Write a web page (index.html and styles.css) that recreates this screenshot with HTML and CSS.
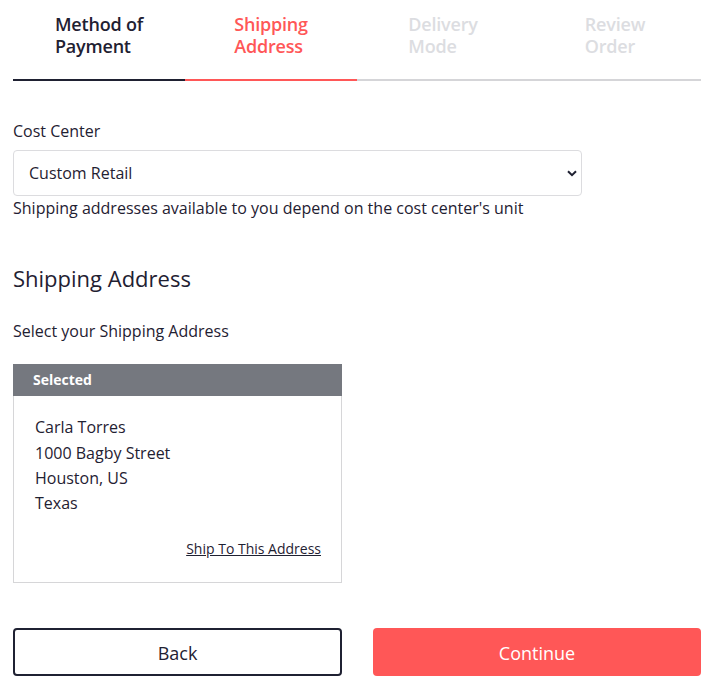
FILE: index.html
```html
<!DOCTYPE html>
<html lang="en">
<head>
<meta charset="utf-8">
<title>Checkout - Shipping Address</title>
<link rel="stylesheet" href="styles.css">
</head>
<body>
<div class="page">
  <nav class="steps">
    <div class="step step-done"><span class="step-label">Method of<br>Payment</span></div>
    <div class="step step-active"><span class="step-label">Shipping<br>Address</span></div>
    <div class="step step-todo"><span class="step-label">Delivery<br>Mode</span></div>
    <div class="step step-todo"><span class="step-label">Review<br>Order</span></div>
  </nav>

  <section class="cost-center">
    <label class="field-label" for="cc">Cost Center</label>
    <div class="select-wrap">
      <select id="cc" class="select">
        <option>Custom Retail</option>
      </select>
      <svg class="chev" width="10" height="7" viewBox="0 0 10 7"><path d="M1 1.2 L5 5.2 L9 1.2" fill="none" stroke="#1f2132" stroke-width="2"/></svg>
    </div>
    <p class="help">Shipping addresses available to you depend on the cost center's unit</p>
  </section>

  <h2 class="heading">Shipping Address</h2>
  <p class="sub">Select your Shipping Address</p>

  <div class="card">
    <div class="card-head">Selected</div>
    <div class="card-body">
      <div class="addr">
        <div>Carla Torres</div>
        <div>1000 Bagby Street</div>
        <div>Houston, US</div>
        <div>Texas</div>
      </div>
      <div class="card-action"><a href="#" class="ship-link">Ship To This Address</a></div>
    </div>
  </div>

  <div class="actions">
    <button class="btn btn-back">Back</button>
    <button class="btn btn-continue">Continue</button>
  </div>
</div>
</body>
</html>
```

FILE: styles.css
```css
* { box-sizing: border-box; }
html, body { margin: 0; padding: 0; background: #fff; }
body {
  font-family: "Open Sans", "Noto Sans", sans-serif;
  color: #1f2132;
  font-size: 16px;
}
.page {
  width: 710px;
  padding: 0 9px 0 13px;
}
.steps {
  display: flex;
  width: 688px;
}
.step {
  flex: 1 1 0;
  display: flex;
  justify-content: center;
  padding: 13px 0 22px;
  border-bottom: 2px solid #d5d5d8;
}
.step-label {
  display: inline-block;
  text-align: left;
  font-size: 18px;
  font-weight: 600;
  line-height: 22px;
  letter-spacing: -0.2px;
}
.step-done { border-bottom-color: #1f2132; color: #1f2132; }
.step-active { border-bottom-color: #ff5757; color: #ff5757; }
.step-todo { color: #dcdde1; }

.cost-center { margin-top: 38px; width: 569px; }
.field-label { display: block; line-height: 24px; }
.select-wrap { position: relative; margin-top: 7px; }
.select {
  display: block;
  width: 569px;
  height: 46px;
  appearance: none;
  -webkit-appearance: none;
  border: 1px solid #dcdcdf;
  border-radius: 4px;
  background: #fff;
  font-family: inherit;
  font-size: 16px;
  color: #1f2132;
  padding: 0 15px;
}
.chev { position: absolute; right: 5px; top: 20px; }
.help { margin: 0; line-height: 24px; white-space: nowrap; }

.heading {
  margin: 43px 0 0;
  font-size: 22px;
  font-weight: 400;
  line-height: 30px;
}
.sub { margin: 26px 0 0; line-height: 24px; }

.card {
  margin-top: 21px;
  width: 329px;
  border: 1px solid #d6d6d8;
}
.card-head {
  background: #75787f;
  color: #fff;
  font-size: 14px;
  font-weight: 700;
  height: 32px;
  line-height: 32px;
  padding-left: 20px;
  margin: -1px -1px 0;
}
.card-body { padding: 19px 20px 23px 21px; }
.addr div { height: 25px; line-height: 25px; }
.addr div:nth-child(1) { height: 26px; }
.card-action { margin-top: 22px; text-align: right; line-height: 20px; }
.ship-link { color: #1f2132; font-size: 14px; text-decoration: underline; }

.actions {
  display: flex;
  justify-content: space-between;
  width: 688px;
  margin-top: 45px;
}
.btn {
  height: 48px;
  border-radius: 4px;
  font-family: inherit;
  font-size: 18px;
  padding: 2px 0 0;
  cursor: pointer;
}
.btn-back { width: 329px; background: #fff; border: 2px solid #1f2132; color: #1f2132; }
.btn-continue { width: 328px; background: #ff5757; border: none; color: #fff; }
```
